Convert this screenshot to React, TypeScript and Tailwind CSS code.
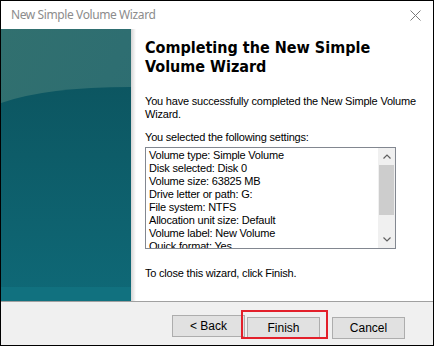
import React from "react";

const settings = [
  "Volume type: Simple Volume",
  "Disk selected: Disk 0",
  "Volume size: 63825 MB",
  "Drive letter or path: G:",
  "File system: NTFS",
  "Allocation unit size: Default",
  "Volume label: New Volume",
  "Quick format: Yes",
];

const SidePanel = () => (
  <svg width="130" height="272" viewBox="0 0 130 272" className="block">
    <defs>
      <linearGradient id="top" x1="0" y1="0" x2="1" y2="1">
        <stop offset="0" stopColor="#31706f" />
        <stop offset="1" stopColor="#2b6c73" />
      </linearGradient>
      <linearGradient id="bottom" x1="0" y1="0" x2="0" y2="1">
        <stop offset="0" stopColor="#0c5661" />
        <stop offset="1" stopColor="#0f6977" />
      </linearGradient>
    </defs>
    <rect width="130" height="272" fill="url(#top)" />
    <path d="M0,74 Q45,58 130,58 L130,272 L0,272 Z" fill="url(#bottom)" />
    <rect y="258" width="130" height="14" fill="#11717f" />
  </svg>
);

const WinButton = ({ label }: { label: string }) => (
  <button className="w-[73px] h-[22px] bg-[#e1e1e1] border border-[#adadad] text-[12px] text-black">
    {label}
  </button>
);

export default function App() {
  return (
    <div
      className="w-[434px] h-[346px] border border-black bg-white flex flex-col"
      style={{ fontFamily: '"Liberation Sans", Arial, sans-serif' }}
    >
      {/* title bar */}
      <div className="h-[28px] flex items-center justify-between pl-[10px] pr-[12px]">
        <span className="text-[12px] tracking-[-0.4px] text-[#8c8c8c] font-['Noto_Sans',sans-serif]">
          New Simple Volume Wizard
        </span>
        <svg width="11" height="11" viewBox="0 0 11 11">
          <path d="M0.5,0.5 L10.5,10.5 M10.5,0.5 L0.5,10.5" stroke="#7a7a7a" strokeWidth="1" />
        </svg>
      </div>

      <div className="h-[272px] flex">
        <SidePanel />
        <div className="w-[5px] bg-gradient-to-r from-[#d4d4d4] to-white" />
        <div className="flex-1 pl-[9px] pt-[9px] text-[11px] leading-[13px] tracking-[-0.2px] text-black">
          <h1 className="font-['DejaVu_Sans_Condensed','DejaVu_Sans',Verdana,sans-serif] font-stretch-condensed font-bold text-[16px] leading-[19px] tracking-normal w-[260px]">
            Completing the New Simple Volume Wizard
          </h1>
          <p className="mt-[19px] w-[285px]">
            You have successfully completed the New Simple Volume Wizard.
          </p>
          <p className="mt-[10px]">You selected the following settings:</p>
          <div className="mt-[3px] w-[251px] h-[102px] border border-[#828790] flex overflow-hidden">
            <div className="flex-1 pl-[3px] pt-px overflow-hidden">
              {settings.map((s) => (
                <div key={s} className="whitespace-nowrap">
                  {s}
                </div>
              ))}
            </div>
            <div className="w-[17px] bg-[#f0f0f0] flex flex-col items-center">
              <div className="h-[17px] flex items-center justify-center">
                <svg width="8" height="5" viewBox="0 0 8 5">
                  <path d="M0.5,4.5 L4,1 L7.5,4.5" fill="none" stroke="#606060" strokeWidth="1.2" />
                </svg>
              </div>
              <div className="w-[15px] h-[50px] bg-[#cdcdcd]" />
              <div className="flex-1" />
              <div className="h-[17px] flex items-center justify-center">
                <svg width="8" height="5" viewBox="0 0 8 5">
                  <path d="M0.5,0.5 L4,4 L7.5,0.5" fill="none" stroke="#606060" strokeWidth="1.2" />
                </svg>
              </div>
            </div>
          </div>
          <p className="mt-[18px]">To close this wizard, click Finish.</p>
        </div>
      </div>

      <div className="h-px bg-[#a0a0a0]" />
      <div className="flex-1 bg-[#f0f0f0] flex justify-end items-start pt-[13px] pr-[28px]">
        <WinButton label="< Back" />
        <div className="relative ml-[2px]">
          <WinButton label="Finish" />
          <div className="absolute left-[-6px] top-[-5px] w-[87px] h-[29px] border-2 border-[#e3202b]" />
        </div>
        <div className="ml-[12px]">
          <WinButton label="Cancel" />
        </div>
      </div>
    </div>
  );
}
